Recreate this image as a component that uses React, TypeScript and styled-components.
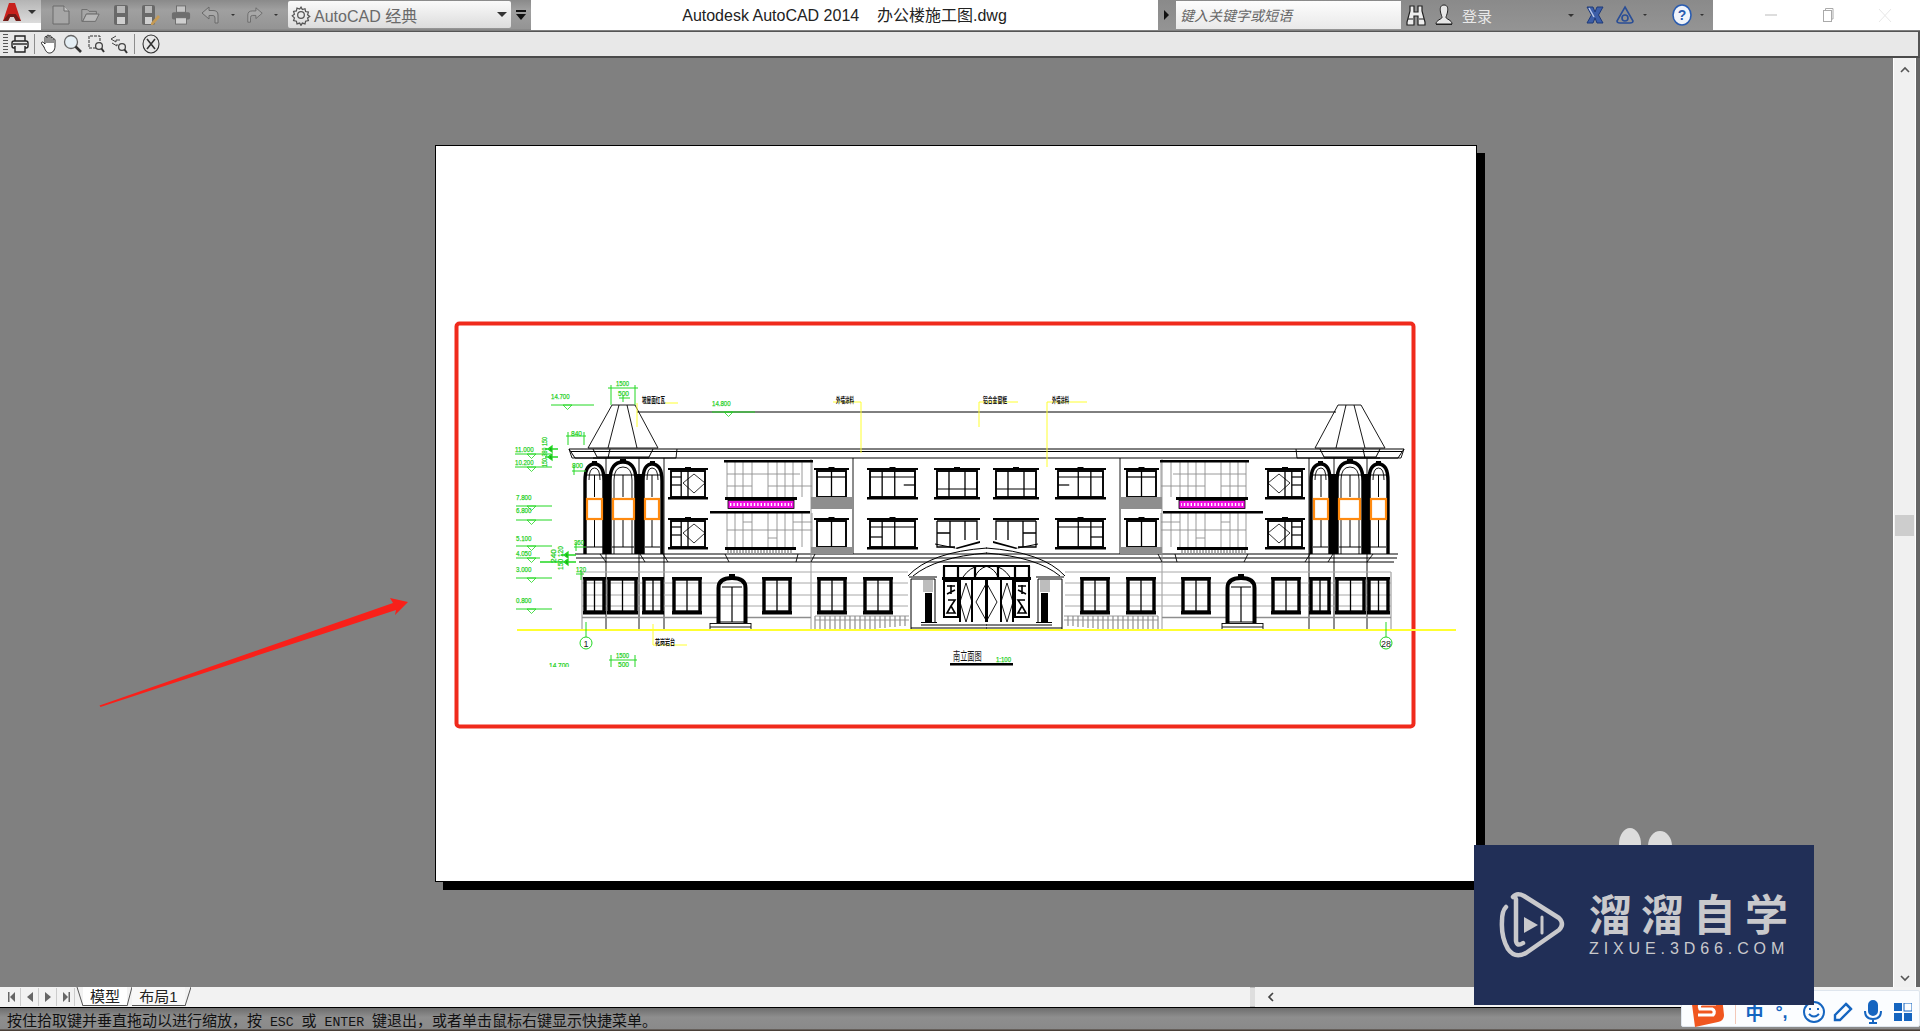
import React from "react";
import styled, { createGlobalStyle } from "styled-components";

const Global = createGlobalStyle`
  html, body { margin: 0; padding: 0; width: 1920px; height: 1031px; overflow: hidden; background: #808080; }
  * { box-sizing: border-box; }
`;
const cjk = `"Liberation Sans", "Noto Sans CJK SC", sans-serif`;

const Root = styled.div`
  position: relative; width: 1920px; height: 1031px; display: flex; flex-direction: column;
  overflow: hidden; font-family: ${cjk}; background: #808080;
`;
const TitleBar = styled.div`display: flex; height: 30px; background: #fff; flex: none;`;
const AppButton = styled.div`
  width: 41px; height: 23px; display: flex; align-items: center; gap: 6px; padding-left: 2px;
  background: linear-gradient(#b4b4b4, #dcdcdc);
`;
const QuickBar = styled.div`
  width: 490px; display: flex; align-items: center; padding-left: 10px;
  background: linear-gradient(#8a8a8a, #a0a0a0 35%, #949494);
  border-bottom: 1px solid #8a8a8a;
`;
const IconSlot = styled.div<{ $w: number }>`
  width: ${p => p.$w}px; height: 26px; display: flex; align-items: center; justify-content: center; flex: none;
`;
const Combo = styled.div`
  width: 223px; height: 27px; display: flex; align-items: center; padding: 0 2px 0 3px;
  background: linear-gradient(#fafafa, #dcdcdc); color: #6a6a6a; font-size: 16px; gap: 3px;
  border-radius: 2px;
`;
const ComboLabel = styled.span`flex: 1; white-space: nowrap;`;
const ComboCaret = styled.span`
  width: 0; height: 0; flex: none; margin-right: 2px;
  border-left: 5px solid transparent; border-right: 5px solid transparent; border-top: 5px solid #333;
`;
const Caret = styled.span<{ $c?: string; $s?: number }>`
  width: 0; height: 0; flex: none;
  border-left: ${p => p.$s ?? 3}px solid transparent; border-right: ${p => p.$s ?? 3}px solid transparent;
  border-top: ${p => p.$s ?? 3}px solid ${p => p.$c ?? "#444"};
`;
const Title = styled.div`
  width: 627px; text-align: center; font-size: 16px; line-height: 32px; color: #222; white-space: pre;
`;
const InfoBar = styled.div`
  width: 555px; display: flex; align-items: center; padding-left: 6px;
  background: linear-gradient(#8a8a8a, #949494);
`;
const SideArrow = styled.span`
  width: 0; height: 0; flex: none; margin-right: 7px;
  border-top: 5px solid transparent; border-bottom: 5px solid transparent; border-left: 5px solid #111;
`;
const SearchBox = styled.div`
  width: 225px; height: 28px; padding-left: 4px; display: flex; align-items: center;
  background: linear-gradient(#fdfdfd, #e9e9e9); color: #666; font-size: 14px; font-style: italic;
`;
const Login = styled.span`color: #e8e8e8; font-size: 15px; width: 106px; margin-left: 4px;`;
const WindowControls = styled.div`flex: 1; display: flex; align-items: center; padding-left: 51px; gap: 44px;`;

const PlotBar = styled.div`
  height: 27px; margin-top: 1px; flex: none; display: flex; align-items: center; padding-left: 3px;
  background: #e8e8e8; border-top: 1px solid #555; border-right: 2px solid #555; border-bottom: 2px solid #4a4a4a;
`;
const Gripper = styled.div`
  width: 5px; height: 20px; margin-right: 1px;
  background: repeating-linear-gradient(#555 0 1px, #e8e8e8 1px 3px);
`;
const Divider = styled.div`width: 1px; height: 20px; background: #8d8d8d; margin: 0 3px;`;

const Workspace = styled.div`flex: 1; display: flex; min-height: 0;`;
const Canvas = styled.div`flex: 1; background: #808080; padding: 87px 0 0 435px;`;
const PageSheet = styled.div`
  width: 1042px; height: 737px; background: #fff; border: 1px solid #000; box-shadow: 8px 8px 0 #000;
`;
const Plot = styled.svg`display: block;`;
const VScroll = styled.div`width: 27px; flex: none; display: flex;`;
const VTrack = styled.div`
  width: 23px; background: #f0f0f0; border-left: 1px solid #fff; border-right: 1px solid #fff;
  display: flex; flex-direction: column; align-items: center; padding-top: 8px;
`;
const VEdge = styled.div`flex: 1; background: #666;`;
const Thumb = styled.div`width: 19px; height: 21px; background: #cdcdcd; margin-top: 441px;`;
const Chevron = styled.svg`margin-top: auto; margin-bottom: 5px;`;

const TabBar = styled.div`
  height: 21px; flex: none; display: flex; align-items: center; padding-left: 3px;
  background: #f2f2f2; border-bottom: 1px solid #000;
`;
const NavSlot = styled.div`width: 18px; height: 18px; display: flex; align-items: center; justify-content: center; border-right: 1px solid #ccc;`;
const Tab = styled.div<{ $active?: boolean; $w: number }>`
  width: ${p => p.$w}px; height: 19px; line-height: 19px; text-align: center; font-size: 15px; color: #222;
  background: ${p => (p.$active ? "#fff" : "#f8f8f8")}; border-bottom: 1px solid #555; align-self: flex-start;
`;
const TabSlant = styled.svg`flex: none; display: block; align-self: flex-start;`;
const HGrip = styled.div`
  margin-left: 1059px; width: 5px; height: 20px;
  background: #dedede; border-top: 1px solid #bbb; border-bottom: 1px solid #bbb;
`;
const HBack = styled.svg`margin-left: 12px;`;

const StatusBar = styled.div`
  height: 23px; flex: none; padding: 3px 0 0 7px; font-size: 15px; line-height: 20px; color: #111; white-space: pre;
  background: linear-gradient(#6e6e6e, #8e8e8e 40%, #8a8a8a 90%, #4a4038 96%);
`;
const Mono = styled.span`font-family: "Liberation Mono", monospace; font-size: 13.2px;`;

const ArrowMark = styled.svg`position: absolute; left: 90px; top: 590px;`;
const Ears = styled.svg`position: absolute; left: 1610px; top: 820px;`;
const Watermark = styled.div`
  position: absolute; left: 1474px; top: 845px; width: 340px; height: 160px; background: #212f57;
  display: flex; align-items: center; padding-left: 25px; gap: 24px; z-index: 3;
`;
const MarkText = styled.div`display: flex; flex-direction: column; color: #c9c9cc; margin-top: -3px;`;
const MarkCn = styled.div`
  font-family: "Noto Sans CJK SC", sans-serif; font-weight: 700; font-size: 43px; line-height: 48px; letter-spacing: 9px; white-space: nowrap;
`;
const MarkEn = styled.div`
  font-family: "Liberation Sans", sans-serif; font-size: 16px; line-height: 20px; letter-spacing: 4.9px; margin-top: 3px; white-space: nowrap;
`;
const Ime = styled.div`
  position: absolute; left: 1681px; top: 990px; width: 239px; height: 37px; background: #fbfdff;
  border: 1px solid #dfe6ee; display: flex; align-items: center; padding: 7px 0 0 6px; z-index: 2; border-radius: 2px;
`;
const ImeText = styled.span`color: #1565c0; font-weight: 700; font-size: 18px; width: 27px; text-align: center;`;
const ImeRule = styled.div`width: 1px; height: 24px; background: #f3c8b8; margin: 0 5px 0 7px;`;
const ImeIcon = styled.svg<{ $ml: number }>`flex: none; margin-left: ${p => p.$ml}px;`;

const DimText = styled.text`font-family: "Liberation Sans", sans-serif; font-size: 8px; fill: #1fd01f; stroke: #1fd01f; stroke-width: 0.25;`;
const NoteText = styled.text`font-family: "Noto Sans CJK SC", sans-serif; font-size: 8px; font-weight: 700; fill: #111;`;
const DrawTitle = styled.text`font-family: "Noto Sans CJK SC", sans-serif; font-size: 12px; fill: #111;`;
const AxisText = styled.text`font-family: "Liberation Sans", sans-serif; font-size: 9px; fill: #222; text-anchor: middle;`;

const G = "#22d822";
const Y = "#ffff30";
const GREY = "#8e8e8e";
const FIT = "spacingAndGlyphs";

function UpperWin({ x, w, y, v = [], h = [] }: { x: number; w: number; y: number; v?: number[]; h?: [number, number, number][] }) {
  return (
    <g>
      <rect x={x} y={y} width={w} height={2} fill="#000" />
      <rect x={x + w / 2 - 3} y={y - 1} width={6} height={3} fill="#000" />
      <rect x={x + 3} y={y + 3} width={w - 6} height={26} fill="none" stroke="#000" strokeWidth={1.9} />
      <rect x={x} y={y + 29} width={w} height={2.5} fill="#000" />
      {v.map(f => <line key={f} x1={x + 3 + f * (w - 6)} x2={x + 3 + f * (w - 6)} y1={y + 3} y2={y + 29} stroke="#000" strokeWidth={1.3} />)}
      {h.map(([a, b, yy]) => <line key={`${a}${yy}`} x1={x + 3 + a * (w - 6)} x2={x + 3 + b * (w - 6)} y1={y + yy} y2={y + yy} stroke="#000" strokeWidth={1.2} />)}
    </g>
  );
}
function CrossWin({ y }: { y: number }) {
  return (
    <g>
      <UpperWin x={668} w={40} y={y} v={[0.3, 0.5]} h={[[0, 0.3, 9], [0, 0.3, 17]]} />
      <path d={`M683 ${y + 15}L694 ${y + 6}L705 ${y + 15}L694 ${y + 25}Z`} fill="none" stroke="#000" strokeWidth={0.8} />
    </g>
  );
}
function GroundWin({ x, w }: { x: number; w: number }) {
  return (
    <g>
      <rect x={x} y={577} width={w} height={2.5} fill="#000" />
      <rect x={x + 2} y={579} width={w - 4} height={33} fill="none" stroke="#000" strokeWidth={3.4} />
      <line x1={x + w / 2} x2={x + w / 2} y1={579} y2={612} stroke="#000" strokeWidth={1.3} />
      <rect x={x} y={611} width={w} height={3.5} fill="#000" />
    </g>
  );
}
function Balcony() {
  const xs = [727, 735, 743, 752, 768, 777, 785, 793, 802, 812];
  return (
    <g stroke={GREY} strokeWidth={0.9} fill="none">
      {xs.map(x => <line key={x} x1={x} x2={x} y1={462} y2={497} />)}
      {xs.map(x => <line key={`b${x}`} x1={x} x2={x} y1={513} y2={547} />)}
      <path d="M727 474H800M727 486H752M768 486H812M727 530H812M743 522H752M768 538H777M793 522H812" />
      <rect x={724} y={460} width={89} height={2.5} fill="#000" stroke="none" />
      <rect x={725} y={497} width={72} height={3} fill="#000" stroke="none" />
      <rect x={728} y={500.5} width={66} height={8} fill="#f010e0" stroke="#000" strokeWidth={0.8} />
      <path d="M730 504.5H792" stroke="#fff" strokeWidth={3} strokeDasharray="1.4 2" />
      <rect x={710} y={511} width={100} height={2.5} fill="#000" stroke="none" />
      <rect x={725} y={547} width={71} height={3} fill="#000" stroke="none" />
      <path d="M728 550V555M731 550V555M734 550V555M737 550V555M740 550V555M743 550V555M746 550V555M749 550V555M752 550V555M755 550V555M758 550V555M761 550V555M764 550V555M767 550V555M770 550V555M773 550V555M776 550V555M779 550V555M782 550V555M785 550V555M788 550V555M791 550V555" strokeWidth={1.4} />
    </g>
  );
}
function Half() {
  return (
    <g>
      <path d="M612 405H635L658 448H588ZM619 405L608 448M627 405L637 448" fill="none" stroke="#000" strokeWidth={0.9} />
      <path d="M569 449L575 458M593 449L597 457H649L653 449M593 458H649M610 449L608 458" fill="none" stroke="#000" strokeWidth={1} />
      <path d="M569 449L572 458H676L677 449" fill="none" stroke="#000" strokeWidth={0.9} />
      <path d="M606 458V630M639 458V630M664 458V630" stroke="#000" strokeWidth={0.9} />
      <path d="M853 458V554" stroke="#000" strokeWidth={0.9} />
      <path d="M811 458V630" stroke={GREY} strokeWidth={0.9} />
      <path d="M582 572V630" stroke={GREY} strokeWidth={1} />
      <path d="M585 554V481Q585 464 594.5 464Q604 464 604 481V554" fill="none" stroke="#000" strokeWidth={3.4} />
      <path d="M610 554V481Q610 462 623 462Q636 462 636 481V554" fill="none" stroke="#000" strokeWidth={3.4} />
      <path d="M643 554V481Q643 464 652 464Q662 464 662 481V554" fill="none" stroke="#000" strokeWidth={3.4} />
      <rect x={603} y={474} width={8} height={80} fill="#000" />
      <rect x={635} y={474} width={8} height={80} fill="#000" />
      <rect x={592} y={461} width={5} height={4} fill="#000" />
      <rect x={620} y={459} width={6} height={4} fill="#000" />
      <rect x={650} y={461} width={5} height={4} fill="#000" />
      <path d="M614 554V480Q614 467 623 467Q632 467 632 480V554M589 480Q589 468 594.5 468Q600 468 600 480M647 480Q647 468 652 468Q658 468 658 480" fill="none" stroke="#000" strokeWidth={0.9} />
      <path d="M594.5 475V497M594.5 519V547M623 475V497M623 519V547M652 475V497M652 519V547M587 475H603M612 475H634M645 475H660M587 547H603M612 547H634M645 547H660" stroke="#000" strokeWidth={1} />
      <rect x={587} y={499} width={15} height={20} fill="#fff" stroke="#ff8a10" strokeWidth={2.2} />
      <rect x={613} y={499} width={21} height={20} fill="#fff" stroke="#ff8a10" strokeWidth={2.2} />
      <rect x={645} y={499} width={14} height={20} fill="#fff" stroke="#ff8a10" strokeWidth={2.2} />
      <path d="M600 554L606 562M640 554L645 562M663 554L668 562M725 554L729 562M798 554L796 562M815 554L811 562" stroke="#000" strokeWidth={0.9} />
      <path d="M582 572H908M582 583H908M582 595H908M582 606H908" stroke="#a8a8a8" strokeWidth={1} />
      <path d="M582 617.5H720M745 617.5H811" stroke={GREY} strokeWidth={1.6} />
      <GroundWin x={583} w={23} />
      <GroundWin x={607} w={31} />
      <GroundWin x={642} w={22} />
      <GroundWin x={672} w={30} />
      <GroundWin x={762} w={30} />
      <GroundWin x={817} w={30} />
      <GroundWin x={863} w={30} />
      <path d="M718.5 623V588Q718.5 578 732 578Q745.5 578 745.5 588V623" fill="none" stroke="#000" strokeWidth={4} />
      <path d="M722 587H742M732 587V622M717 622H747" stroke="#000" strokeWidth={1.2} />
      <rect x={729} y={574} width={6} height={4} fill="#000" />
      <path d="M710 623.5H751M710 627H751M710 623V630M751 623V630" stroke="#000" strokeWidth={0.9} />
      <CrossWin y={468} />
      <CrossWin y={518} />
      <UpperWin x={814} w={35} y={468} v={[0.5]} h={[[0, 1, 9]]} />
      <UpperWin x={814} w={35} y={518} v={[0.5]} />
      <rect x={811} y={497} width={42} height={12} fill={GREY} />
      <rect x={811} y={547} width={42} height={7} fill={GREY} />
      <UpperWin x={867} w={51} y={468} v={[0.27, 0.55]} h={[[0, 1, 9], [0.75, 1, 17]]} />
      <UpperWin x={867} w={51} y={518} v={[0.27, 0.55]} h={[[0, 1, 9], [0, 0.27, 19]]} />
      <UpperWin x={934} w={46} y={468} v={[0.3, 0.7]} h={[[0, 1, 21]]} />
      <rect x={934} y={518} width={46} height={2} fill="#000" />
      <path d="M937 521H977V540M937 521V547H955M950 521V547M965 521V540M937 533H950" fill="none" stroke="#000" strokeWidth={1.3} />
      <path d="M955 548L980 541V543L957 549Z" fill="#000" />
      <Balcony />
      <path d="M815 616H909M815 620H909" stroke={GREY} strokeWidth={0.9} />
      <path d="M815 616V630M820 616V630M825 616V630M830 616V630M835 616V630M840 616V630M845 616V630M850 616V630M855 616V630M860 616V630M865 616V630M870 616V630M875 616V630M880 616V628M885 616V628M890 616V627M895 616V627M900 616V626M905 616V626" stroke={GREY} strokeWidth={1.2} />
      <path d="M908 576Q930 552 987 548M913 576Q936 557 987 553" fill="none" stroke="#000" strokeWidth={1} />
      <path d="M955 548L935 544" stroke="#000" strokeWidth={1} />
      <path d="M909 577H937M911 579H935M911 579V630M935 579V622" stroke="#000" strokeWidth={1} fill="none" />
      <rect x={923} y={580} width={10} height={12} fill="#bdbdbd" />
      <rect x={925} y={593} width={7} height={29} fill="#000" />
      <path d="M921 622.5H937M921 625H987" stroke="#000" strokeWidth={1} />
      <path d="M911 628H987" stroke="#000" strokeWidth={1} />
      <rect x={943} y={565} width={44} height={2} fill="#000" />
      <path d="M944 566V579M958 566V579M975 566V579" stroke="#000" strokeWidth={2.2} />
      <rect x={942} y={577} width={45} height={3} fill="#000" />
      <path d="M963 577Q970 567 979 566M987 566Q978 569 975 577" fill="none" stroke="#000" strokeWidth={1} />
      <rect x={943} y={580} width={16} height={38} fill="#000" />
      <rect x={945} y={582} width={12} height={34} fill="#fff" />
      <path d="M947 586H955M951 585V594M947 594L955 590M948 600H955L951 606L955 613H947L951 606" stroke="#000" strokeWidth={1.6} fill="none" />
      <path d="M960 580V622M972 580V622M987 580V622" stroke="#000" strokeWidth={2} />
      <path d="M966 583L972 602L966 622L960 602ZM987 582L976 602L987 622" fill="none" stroke="#000" strokeWidth={0.9} />
    </g>
  );
}
function Level({ x, y, t, len = 36, tx, up = 6 }: { x: number; y: number; t: string; len?: number; tx: number; up?: number }) {
  return (
    <g>
      <DimText x={x} y={y - up} textLength={t.length * 3.1} lengthAdjust={FIT}>{t}</DimText>
      <line x1={x} x2={x + len} y1={y} y2={y} stroke={G} strokeWidth={1} />
      <path d={`M${tx} ${y}H${tx + 9}L${tx + 4.5} ${y + 4.5}Z`} fill="none" stroke={G} strokeWidth={0.8} />
    </g>
  );
}
function DrawingSheet() {
  return (
    <Plot width={1040} height={735} viewBox="436 146 1040 735">
      <rect x={456.5} y={323.5} width={957} height={403} rx={3} fill="none" stroke="#f02a1c" strokeWidth={4} />
      <line x1={637} x2={1336} y1={412} y2={412} stroke="#000" strokeWidth={1} />
      <path d="M569 449H1404M571 451.5H1402M575 458H1398M575 554H1398M576 558H1397M579 562H1394" stroke="#000" strokeWidth={1} />
      <Half />
      <g transform="translate(1973 0) scale(-1 1)"><Half /></g>
      <line x1={517} x2={1456} y1={630} y2={630} stroke={Y} strokeWidth={2} />
      <Level x={551} y={405} t="14.700" len={43} tx={563} />
      <Level x={712} y={412} t="14.800" len={43} tx={724} />
      <Level x={515} y={454} t="11.000" tx={527} up={2} />
      <Level x={515} y={467} t="10.200" len={37} tx={527} up={2} />
      <Level x={516} y={506} t="7.800" tx={527} />
      <Level x={516} y={520} t="6.800" tx={527} up={7} />
      <Level x={516} y={546} t="5.100" tx={527} up={5} />
      <Level x={516} y={558} t="4.050" len={24} tx={527} up={2} />
      <Level x={516} y={578} t="3.000" tx={527} />
      <Level x={516} y={609} t="0.800" tx={527} />
      <path d="M611 385V405M635 385V405M608 388H638M619 398H630M623 395V402" stroke={G} strokeWidth={1} />
      <path d="M568 432V445M584 432V445M566 436H586" stroke={G} strokeWidth={1} />
      <path d="M572 471H586M574 466V475" stroke={G} strokeWidth={1} />
      <path d="M574 547H586M576 543V551" stroke={G} strokeWidth={1} />
      <path d="M576 574H584M581 570V580" stroke={G} strokeWidth={1} />
      <path d="M545 449H558M545 457H558M548 449L552 446V452ZM548 457L552 454V460Z" stroke={G} strokeWidth={1.3} />
      <path d="M561 555H576M561 562H576M540 562H576M564 555L568 552V558ZM564 562L568 559V565Z" stroke={G} strokeWidth={1.3} />
      <DimText x={616} y={386} textLength={13} lengthAdjust={FIT}>1500</DimText>
      <DimText x={618} y={396} textLength={11} lengthAdjust={FIT}>500</DimText>
      <DimText x={571} y={436} textLength={11} lengthAdjust={FIT}>840</DimText>
      <DimText x={572} y={468} textLength={11} lengthAdjust={FIT}>800</DimText>
      <DimText x={574} y={545} textLength={10} lengthAdjust={FIT}>360</DimText>
      <DimText x={576} y={572} textLength={10} lengthAdjust={FIT}>120</DimText>
      <DimText transform="translate(547 467) rotate(-90)" textLength={30} lengthAdjust={FIT}>150 380 150</DimText>
      <DimText transform="translate(556 563) rotate(-90)" textLength={14} lengthAdjust={FIT}>240</DimText>
      <DimText transform="translate(563 570) rotate(-90)" textLength={24} lengthAdjust={FIT}>150 120</DimText>
      <path d="M665 403H678M637 403V427" stroke={Y} strokeWidth={1} fill="none" />
      <NoteText x={642} y={403} textLength={23} lengthAdjust={FIT}>坡屋面红瓦</NoteText>
      <path d="M833 402H861V453" stroke={Y} strokeWidth={1} fill="none" />
      <NoteText x={836} y={403} textLength={18} lengthAdjust={FIT}>外墙涂料</NoteText>
      <path d="M979 427V402H1018" stroke={Y} strokeWidth={1} fill="none" />
      <NoteText x={983} y={403} textLength={24} lengthAdjust={FIT}>铝合金窗框</NoteText>
      <path d="M1047 467V402H1087" stroke={Y} strokeWidth={1} fill="none" />
      <NoteText x={1052} y={403} textLength={17} lengthAdjust={FIT}>外墙涂料</NoteText>
      <path d="M653 624V645H687" stroke={Y} strokeWidth={1} fill="none" />
      <NoteText x={655} y={645} textLength={20} lengthAdjust={FIT}>花岗岩台</NoteText>
      <path d="M586 622V637M1386 622V637" stroke={G} strokeWidth={1} />
      <circle cx={586} cy={643} r={6} fill="#fff" stroke={G} strokeWidth={1} />
      <circle cx={1386} cy={643} r={6} fill="#fff" stroke={G} strokeWidth={1} />
      <AxisText x={586} y={646.5}>1</AxisText>
      <AxisText x={1386} y={646.5}>28</AxisText>
      <DimText x={616} y={658} textLength={13} lengthAdjust={FIT}>1500</DimText>
      <DimText x={618} y={667} textLength={11} lengthAdjust={FIT}>500</DimText>
      <path d="M611 655V667M635 655V667M609 660H637" stroke={G} strokeWidth={1} />
      <DimText x={549} y={668} textLength={20} lengthAdjust={FIT}>14.700</DimText>
      <rect x={540} y={667} width={110} height={8} fill="#fff" />
      <DrawTitle transform="translate(953 661) scale(0.6 1)">南立面图</DrawTitle>
      <rect x={950} y={663} width={63} height={2.5} fill="#000" />
      <DimText x={996} y={662} textLength={15} lengthAdjust={FIT}>1:100</DimText>
    </Plot>
  );
}

const DOC = "#6a6a6a";
const Ico = ({ w = 20, h = 22, children }: { w?: number; h?: number; children: React.ReactNode }) => (
  <svg width={w} height={h} viewBox={`0 0 ${w} ${h}`}>{children}</svg>
);

export default function App() {
  return (
    <Root>
      <Global />
      <TitleBar>
        <AppButton>
          <svg width={20} height={20} viewBox="0 0 20 20">
            <path d="M7 1H13L19 19H14L11.5 14H8.5L6 19H1Z" fill="#c8201c" />
            <path d="M1 19L6.5 12H13.5L19 19H14L12 15H8L6 19Z" fill="#6e1c18" />
          </svg>
          <Caret $s={4} $c="#333" />
        </AppButton>
        <QuickBar>
          <IconSlot $w={20}><Ico><path d="M2 2H13L18 7V20H2Z" fill="#a6a6a6" stroke={DOC} /><path d="M13 2V7H18" fill="#c4c4c4" stroke={DOC} /></Ico></IconSlot>
          <IconSlot $w={9} />
          <IconSlot $w={20}><Ico w={22}><path d="M2 5H8L10 7H18V10H7L3 18H2Z" fill="#a6a6a6" stroke={DOC} /><path d="M7 10H21L17 18H3Z" fill="#b8b8b8" stroke={DOC} /></Ico></IconSlot>
          <IconSlot $w={11} />
          <IconSlot $w={20}><Ico><rect x={3} y={1} width={14} height={20} rx={2} fill="#696969" /><rect x={6} y={2} width={8} height={7} fill="#b6b6b6" /><rect x={6} y={13} width={8} height={7} fill="#cfcfcf" /></Ico></IconSlot>
          <IconSlot $w={9} />
          <IconSlot $w={20}><Ico><rect x={2} y={1} width={13} height={20} rx={2} fill="#696969" /><rect x={5} y={2} width={7} height={7} fill="#b6b6b6" /><rect x={5} y={13} width={7} height={7} fill="#cfcfcf" /><path d="M11 19L18 11L20 13L13 21H11Z" fill="#c49a55" /></Ico></IconSlot>
          <IconSlot $w={11} />
          <IconSlot $w={20}><Ico w={22}><rect x={6} y={1} width={10} height={7} fill="#c4c4c4" stroke={DOC} /><rect x={1} y={8} width={20} height={8} rx={2} fill="#6e6e6e" /><rect x={5} y={14} width={12} height={7} fill="#cfcfcf" stroke={DOC} /></Ico></IconSlot>
          <IconSlot $w={9} />
          <IconSlot $w={20}><Ico><path d="M9 3L2 9L9 15V11.5H13Q15 11.5 15 14V19H18V11Q18 6.5 13 6.5H9Z" fill="#a8a8a8" stroke={DOC} /></Ico></IconSlot>
          <IconSlot $w={26}><Caret $s={2.5} $c="#333" /></IconSlot>
          <IconSlot $w={18}><Ico><path d="M11 3L18 9L11 15V11.5H7Q5 11.5 5 14V19H2V11Q2 6.5 7 6.5H11Z" fill="#a8a8a8" stroke={DOC} /></Ico></IconSlot>
          <IconSlot $w={24}><Caret $s={2.5} $c="#333" /></IconSlot>
          <Combo>
            <svg width={20} height={22} viewBox="0 0 24 24" fill="none" stroke="#555" strokeWidth={1.5}>
              <circle cx={12} cy={12} r={4} />
              <path d="M12 2.5l1.6 3 3.2-1 .7 3.3 3.4.7-1 3.2 2.6 2-2.6 1.8 1 3.2-3.4.7-.7 3.3-3.2-1-1.6 2.7-1.6-2.7-3.2 1-.7-3.3-3.4-.7 1-3.2L1.5 13l2.6-2-1-3.2 3.4-.7.7-3.3 3.2 1Z" />
            </svg>
            <ComboLabel>AutoCAD 经典</ComboLabel>
            <ComboCaret />
          </Combo>
          <IconSlot $w={20}>
            <svg width={12} height={12} viewBox="0 0 12 12"><rect x={1} y={1} width={10} height={2} fill="#111" /><path d="M1 5H11L6 11Z" fill="#111" /></svg>
          </IconSlot>
        </QuickBar>
        <Title>{"Autodesk AutoCAD 2014    办公楼施工图.dwg"}</Title>
        <InfoBar>
          <SideArrow />
          <SearchBox>键入关键字或短语</SearchBox>
          <IconSlot $w={29}>
            <svg width={20} height={22} viewBox="0 0 20 22"><path d="M4 2H8V8H12V2H16V7L19 18V21H12V12H8V21H1V18L4 7Z" fill="#eee" stroke="#222" strokeWidth={1.2} /><path d="M2 15H7M13 15H18" stroke="#222" /></svg>
          </IconSlot>
          <IconSlot $w={28}>
            <svg width={20} height={22} viewBox="0 0 20 22"><path d="M10 1C6 1 6 5 6.5 8C7 11 8 12 8 13.5C8 15 2 16 2 20H18C18 16 12 15 12 13.5C12 12 13 11 13.5 8C14 5 14 1 10 1Z" fill="#e6e6e6" stroke="#222" /><line x1={2} x2={18} y1={20.5} y2={20.5} stroke="#222" /></svg>
          </IconSlot>
          <Login>登录</Login>
          <Caret $c="#333" />
          <IconSlot $w={9} />
          <IconSlot $w={24}>
            <svg width={20} height={20} viewBox="0 0 20 20"><path d="M2 2H8L10 7L12 2H18L13.5 10L18 18H12L10 13L8 18H2L6.5 10Z" fill="#3c5ea8" stroke="#1f3a78" /><path d="M4 3L9 12" stroke="#b9c8ea" strokeWidth={1.5} /></svg>
          </IconSlot>
          <IconSlot $w={36}>
            <svg width={20} height={20} viewBox="0 0 20 20" fill="none" stroke="#2a4e96" strokeWidth={1.6}><path d="M10 2L18 16Q18 18 15 18H5Q2 18 2 16Z" /><circle cx={10} cy={13} r={3} /></svg>
          </IconSlot>
          <Caret $s={2.5} $c="#333" />
          <IconSlot $w={25} />
          <IconSlot $w={20}>
            <svg width={20} height={22} viewBox="0 0 20 22"><ellipse cx={10} cy={11} rx={9} ry={10} fill="#f0f4fb" stroke="#2a5cb0" strokeWidth={1.6} /><text x={10} y={16} textAnchor="middle" fontSize={14} fontWeight={700} fontFamily="Liberation Sans" fill="#2a5cb0">?</text></svg>
          </IconSlot>
          <IconSlot $w={20}><Caret $s={2.5} $c="#333" /></IconSlot>
        </InfoBar>
        <WindowControls>
          <svg width={14} height={14} viewBox="0 0 14 14"><line x1={1} x2={13} y1={7} y2={7} stroke="#bbb" /></svg>
          <svg width={12} height={16} viewBox="0 0 12 16" fill="none" stroke="#aaa"><rect x={1.5} y={3.5} width={8} height={11} /><path d="M3.5 3.5V1.5H11V12H9.5" /></svg>
          <svg width={14} height={16} viewBox="0 0 14 16" stroke="#e8e8e8"><path d="M1 2L13 15M13 2L1 15" /></svg>
        </WindowControls>
      </TitleBar>
      <PlotBar>
        <Gripper />
        <IconSlot $w={22}>
          <svg width={20} height={20} viewBox="0 0 20 20" fill="none" stroke="#222" strokeWidth={1.4}><path d="M5 7V2H15V7" /><rect x={2} y={7} width={16} height={7} rx={2} /><path d="M5 12V18H15V12" fill="#eee" /><line x1={3} x2={17} y1={10} y2={10} /></svg>
        </IconSlot>
        <Divider />
        <IconSlot $w={23}>
          <svg width={19} height={20} viewBox="0 0 19 20" fill="#fff" stroke="#222" strokeWidth={1}><path d="M4 13L1.5 9.5C1 8 2.5 7.5 3.5 8.5L5 10V3.5C5 2 7 2 7 3.5V2C7 .8 9 .8 9 2V2.5C9 1.3 11 1.3 11 2.5V4C11 3 13 3 13 4.5V5.5C13 4.6 15 4.6 15 6V12C15 16 13 19 9.5 19C7 19 5.5 17 4 13Z" /><path d="M7 3V9M9 2.5V9M11 4V9M13 5.5V9" fill="none" /></svg>
        </IconSlot>
        <IconSlot $w={23}>
          <svg width={20} height={20} viewBox="0 0 20 20"><circle cx={8} cy={8} r={6.5} fill="#e4eef4" stroke="#666" strokeWidth={1.3} /><path d="M12.5 12.5L18 18" stroke="#333" strokeWidth={2.6} /></svg>
        </IconSlot>
        <IconSlot $w={23}>
          <svg width={18} height={20} viewBox="0 0 18 20" fill="none"><path d="M9 14H2V2H13V9" stroke="#333" strokeDasharray="3 1" /><circle cx={12} cy={12} r={3.4} stroke="#444" strokeWidth={1.3} /><path d="M14.5 14.5L17 18" stroke="#333" strokeWidth={2} /></svg>
        </IconSlot>
        <IconSlot $w={24}>
          <svg width={20} height={20} viewBox="0 0 20 20" fill="none"><path d="M7 2L2 5L7 8V6H11M3 9L8 12V10" stroke="#444" /><circle cx={13} cy={13} r={3.4} stroke="#444" strokeWidth={1.3} /><path d="M15.5 15.5L18 19" stroke="#333" strokeWidth={2} /></svg>
        </IconSlot>
        <Divider />
        <IconSlot $w={25}>
          <svg width={18} height={20} viewBox="0 0 18 20" fill="none" stroke="#333" strokeWidth={1.1}><ellipse cx={9} cy={10} rx={8} ry={9} /><path d="M5 5L13 15M13 5L5 15" strokeWidth={1.6} /></svg>
        </IconSlot>
      </PlotBar>
      <Workspace>
        <Canvas>
          <PageSheet><DrawingSheet /></PageSheet>
        </Canvas>
        <VScroll>
          <VTrack>
            <svg width={12} height={8} viewBox="0 0 12 8" fill="none" stroke="#555" strokeWidth={1.6}><path d="M2 6L6 2L10 6" /></svg>
            <Thumb />
            <Chevron width={12} height={8} viewBox="0 0 12 8" fill="none" stroke="#555" strokeWidth={1.6}><path d="M2 2L6 6L10 2" /></Chevron>
          </VTrack>
          <VEdge />
        </VScroll>
      </Workspace>
      <TabBar>
        <NavSlot><svg width={10} height={12} viewBox="0 0 10 12" fill="#666"><rect x={1} y={1} width={1.5} height={10} /><path d="M8 1V11L3 6Z" /></svg></NavSlot>
        <NavSlot><svg width={10} height={12} viewBox="0 0 10 12" fill="#666"><path d="M8 1V11L2 6Z" /></svg></NavSlot>
        <NavSlot><svg width={10} height={12} viewBox="0 0 10 12" fill="#666"><path d="M2 1V11L8 6Z" /></svg></NavSlot>
        <NavSlot><svg width={10} height={12} viewBox="0 0 10 12" fill="#666"><rect x={7.5} y={1} width={1.5} height={10} /><path d="M2 1V11L7 6Z" /></svg></NavSlot>
        <TabSlant width={8} height={20} viewBox="0 0 8 20"><path d="M2 0L8 19" stroke="#555" fill="none" /></TabSlant>
        <Tab $active $w={44}>模型</Tab>
        <TabSlant width={5} height={20} viewBox="0 0 5 20"><path d="M5 0L0 19" stroke="#555" fill="none" /></TabSlant>
        <Tab $w={53}>布局1</Tab>
        <TabSlant width={6} height={20} viewBox="0 0 6 20"><path d="M6 0L0 19" stroke="#555" fill="none" /></TabSlant>
        <HGrip />
        <HBack width={8} height={12} viewBox="0 0 8 12" fill="none" stroke="#444" strokeWidth={1.6}><path d="M6 2L2 6L6 10" /></HBack>
      </TabBar>
      <StatusBar>按住拾取键并垂直拖动以进行缩放，按<Mono> ESC </Mono>或<Mono> ENTER </Mono>键退出，或者单击鼠标右键显示快捷菜单。</StatusBar>

      <ArrowMark width={330} height={125} viewBox="90 590 330 125">
        <path d="M99.5 705.5L393 603L390 598L408 602L395 615L396 610L100.5 707Z" fill="#f8201a" />
      </ArrowMark>
      <Ears width={70} height={30} viewBox="0 0 70 30">
        <ellipse cx={20} cy={24} rx={11} ry={16} fill="#dcdcdc" />
        <ellipse cx={50} cy={26} rx={12} ry={15} fill="#dcdcdc" />
      </Ears>
      <Ime>
        <svg width={40} height={30} viewBox="0 0 36 30"><path d="M1 0H32L34 18Q34 24 28 25L5 30Z" fill="#f0561f" /><path d="M26 7H12Q8 8 10 12H22Q26 14 23 18H8" fill="none" stroke="#fff" strokeWidth={3.2} /></svg>
        <ImeRule />
        <ImeText>中</ImeText>
        <ImeText>°,</ImeText>
        <ImeIcon $ml={7} width={24} height={24} viewBox="0 0 24 24" fill="none" stroke="#1565c0" strokeWidth={2}><circle cx={12} cy={12} r={10} /><path d="M7 14Q12 19 17 14" /><path d="M8 8V10M16 8V10" /></ImeIcon>
        <ImeIcon $ml={5} width={24} height={24} viewBox="0 0 24 24" fill="none" stroke="#1565c0" strokeWidth={2.4}><path d="M4 15L15 4L20 9L9 20H4Z" /><path d="M15 4L20 9" /></ImeIcon>
        <ImeIcon $ml={8} width={20} height={24} viewBox="0 0 20 24" fill="none" stroke="#1565c0" strokeWidth={2}><rect x={6} y={1} width={8} height={14} rx={4} fill="#1565c0" /><path d="M2 11Q2 19 10 19Q18 19 18 11M10 19V23M6 23H14" /></ImeIcon>
        <ImeIcon $ml={11} width={18} height={18} viewBox="0 0 18 18" fill="#1565c0"><rect width={8} height={8} /><rect x={10} width={8} height={8} fill="none" stroke="#1565c0" /><rect y={10} width={8} height={8} /><rect x={10} y={10} width={8} height={8} /></ImeIcon>
      </Ime>
      <Watermark>
        <svg width={66} height={68} viewBox="0 0 66 68" fill="none" stroke="#c9c9cc" strokeWidth={4.5} strokeLinecap="round" strokeLinejoin="round">
          <path d="M14 6Q18 1 25 5L60 27Q66 33 60 39L27 62Q16 68 9 58Q2 46 3 30Q3 20 7 16" />
          <path d="M17 8V50Q18 56 24 52" />
          <path d="M25 26L39 34L25 42Z" fill="#c9c9cc" stroke="none" />
          <path d="M43 26V42" strokeWidth={3} />
        </svg>
        <MarkText>
          <MarkCn>溜溜自学</MarkCn>
          <MarkEn>ZIXUE.3D66.COM</MarkEn>
        </MarkText>
      </Watermark>
    </Root>
  );
}
